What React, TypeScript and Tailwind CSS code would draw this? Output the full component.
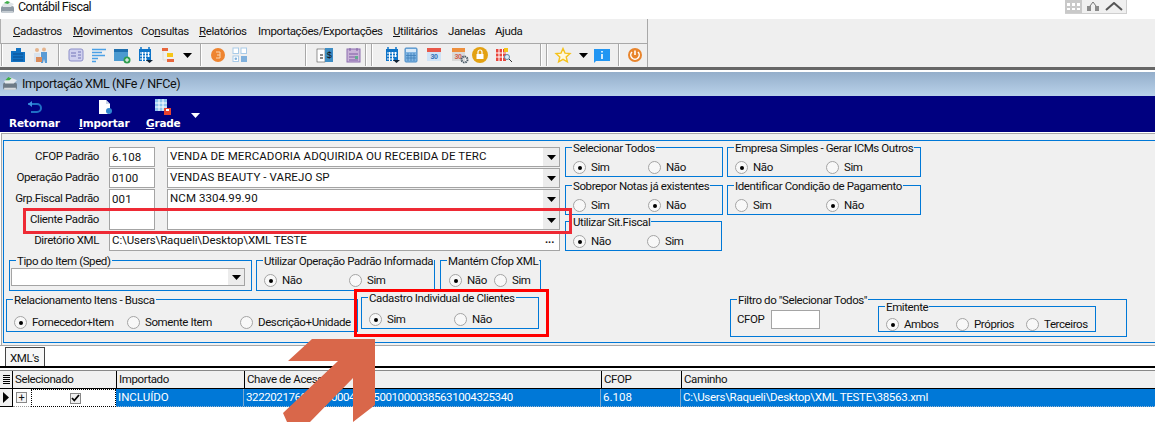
import React from 'react';

const Groove = ({ className = '' }: { className?: string }) => (
  <div className={`w-[2px] h-[22px] border-l border-[#a8a8a8] bg-white shrink-0 ${className}`} />
);

const Caret = ({ className = '', color = '#000' }: { className?: string; color?: string }) => (
  <svg width="9" height="5" viewBox="0 0 9 5" className={`shrink-0 ${className}`}>
    <path d="M0 0h9L4.5 5z" fill={color} />
  </svg>
);

// toolbar icons, 16x16 with a bit of bleed
const Ico = ({ className = '', children }: { className?: string; children: React.ReactNode }) => (
  <svg width="16" height="16" viewBox="0 0 16 16" className={`shrink-0 overflow-visible ${className}`}>
    {children}
  </svg>
);

const CalendarBlue = ({ className = '' }: { className?: string }) => (
  <Ico className={className}>
    <rect x="2" y="2" width="12" height="12" fill="#0e74c8" />
    <path d="M4 0v3M12 0v3" stroke="#0e74c8" strokeWidth="1.5" />
    <path d="M3 6h10M3 9h10M3 12h7M5.5 5v9M8.5 5v9M11.5 5v5" stroke="#fff" strokeWidth="1" />
    <path d="M9 13h7l-3.5 3z" fill="#123" />
  </Ico>
);

const Cal30 = ({ top, className = '' }: { top: string; className?: string }) => (
  <Ico className={className}>
    <rect x="1" y="2" width="14" height="12" fill="#cfe3f6" />
    <rect x="1" y="1" width="14" height="4" fill={top} />
    <text x="8" y="12" textAnchor="middle" fontSize="7" fontWeight="700" fill="#2f6fb4" fontFamily="Liberation Sans">30</text>
  </Ico>
);

const Radio = ({ label, on = false, className = '' }: { label: string; on?: boolean; className?: string }) => (
  <div className={`flex items-center h-[13px] shrink-0 ${className}`}>
    <div className="w-[13px] h-[13px] rounded-full border border-[#a4a4a4] bg-[#f8f8f8] flex items-center justify-center shrink-0">
      {on && <div className="w-[4px] h-[4px] rounded-full bg-black" />}
    </div>
    <span className="ml-[5px] leading-[13px] whitespace-nowrap">{label}</span>
  </div>
);

const Group = ({ title, className = '', children }: { title: string; className?: string; children?: React.ReactNode }) => (
  <div className={`relative border border-[#0078d7] shrink-0 ${className}`}>
    <span className="absolute -top-[6px] left-[6px] bg-[#f0f0f0] px-px leading-[13px] whitespace-nowrap">{title}</span>
    {children}
  </div>
);

const Input = ({ value = '', className = '' }: { value?: string; className?: string }) => (
  <div className={`h-[20px] border border-[#a4a4a4] bg-white pl-[2px] leading-[18px] tracking-[0.1px] shrink-0 whitespace-nowrap overflow-hidden ${className}`}>{value}</div>
);

const Select = ({ value = '', className = '' }: { value?: string; className?: string }) => (
  <div className={`border border-[#a4a4a4] bg-white pl-[2px] flex items-center justify-between shrink-0 tracking-[0.1px] ${className}`}>
    <span className="whitespace-nowrap">{value}</span>
    <div className="w-[16px] h-full bg-[#ececec] flex items-center justify-center">
      <Caret />
    </div>
  </div>
);

const FieldRow = ({ label, code, text }: { label: string; code: string; text: string }) => (
  <div className="flex items-center h-[20px]">
    <div className="w-[95px] text-right whitespace-nowrap">{label}</div>
    <Input value={code} className="ml-[10px] w-[46px]" />
    <Select value={text} className="ml-[12px] w-[393px] h-[20px]" />
  </div>
);

const Menu = () => (
  <div className="h-[25px] flex items-center pt-px pl-[12px] border-l border-[#b0b0b0] border-b border-b-[#a8a8a8] text-[#111]">
    <span className="w-[60px]"><u>C</u>adastros</span>
    <span className="w-[68px]"><u>M</u>ovimentos</span>
    <span className="w-[58px]">Co<u>n</u>sultas</span>
    <span className="w-[59px]"><u>R</u>elatórios</span>
    <span className="w-[135px]">Importações/Exportações</span>
    <span className="w-[55px]"><u>U</u>tilitários</span>
    <span className="w-[47px]">Janelas</span>
    <span>Ajuda</span>
  </div>
);

const Toolbar = () => (
  <div className="h-[22px] flex items-center">
    <Groove className="ml-[1px]" />
    {/* building */}
    <Ico className="ml-[7px]">
      <path d="M1 4h5V1h5v4h4v10H1z" fill="#1273c4" />
      <path d="M3 7h10M3 10h10M3 13h10" stroke="#0a4f8f" />
    </Ico>
    {/* people */}
    <Ico className="ml-[6px]">
      <circle cx="5" cy="3" r="2" fill="#e6b48c" />
      <circle cx="12" cy="2.5" r="2" fill="#e6b48c" />
      <path d="M2 6h6v9H2z" fill="#d9e3ee" />
      <path d="M9 5h6v11h-2l-1-4-1 4H9z" fill="#5a9bd5" />
      <rect x="4" y="10" width="6" height="5" fill="#d98a5a" />
    </Ico>
    <Groove className="ml-[10px]" />
    {/* card */}
    <Ico className="ml-[8px]">
      <rect x="1" y="2" width="14" height="12" rx="2" fill="#cfd0ee" stroke="#8d8fc9" />
      <path d="M3 6h5M3 9h5" stroke="#7274b8" />
      <path d="M10 5h3M10 8h3M10 11h3" stroke="#7274b8" />
    </Ico>
    {/* list */}
    <Ico className="ml-[7px]">
      <path d="M1 2.5h14M1 5.5h10M1 8.5h13M1 11.5h6M1 14.5h4" stroke="#4aa0e6" strokeWidth="1.4" />
    </Ico>
    {/* window */}
    <Ico className="ml-[7px]">
      <rect x="0" y="2" width="14" height="12" fill="#4b9ad0" />
      <rect x="0" y="2" width="14" height="3" fill="#1e6fae" />
      <circle cx="13" cy="13" r="3.5" fill="#2e9e4f" />
      <path d="M11 13h4M13 11v4" stroke="#fff" />
    </Ico>
    <CalendarBlue className="ml-[7px]" />
    {/* org */}
    <Ico className="ml-[8px]">
      <rect x="1" y="1" width="6" height="3" fill="#e8663c" />
      <rect x="6" y="6" width="6" height="4" fill="#f5c518" />
      <rect x="6" y="12" width="7" height="3" fill="#e8663c" />
      <path d="M2 4v9h4" stroke="#ddd" fill="none" />
    </Ico>
    <Caret className="ml-[6px]" />
    <Groove className="ml-[8px]" />
    {/* orange badge */}
    <Ico className="ml-[8px]">
      <circle cx="8" cy="8" r="7" fill="#ee8430" />
      <path d="M6 5h4v6H6M7 8h3" stroke="#fbd7b0" fill="none" />
    </Ico>
    {/* squares */}
    <Ico className="ml-[6px]">
      <rect x="1" y="1" width="5.5" height="5.5" fill="#fff" stroke="#a9cbe8" />
      <rect x="9" y="1" width="5.5" height="5.5" fill="#fff" stroke="#a9cbe8" />
      <rect x="1" y="9" width="5.5" height="5.5" fill="#fff" stroke="#a9cbe8" />
      <circle cx="3.8" cy="11.8" r="1.3" fill="#7fb0dc" />
      <rect x="9" y="9" width="6" height="6" fill="#7fb0dc" />
    </Ico>
    <Groove className="ml-[57px]" />
    {/* ledger */}
    <Ico className="ml-[10px]">
      <rect x="0" y="2" width="8" height="13" fill="#fff" stroke="#333" strokeWidth="0.5" />
      <rect x="8" y="1" width="8" height="14" fill="#3d8dc4" />
      <path d="M3 8h3M3 11h3" stroke="#111" />
      <text x="12" y="11" textAnchor="middle" fontSize="9" fill="#111" fontFamily="Liberation Sans">$</text>
    </Ico>
    {/* purple sheet */}
    <Ico className="ml-[13px]">
      <rect x="1" y="2" width="13" height="13" fill="#c9b4d8" stroke="#8d6fb0" />
      <path d="M4 1v3M11 1v3M3 7h9M3 10h9M3 13h9" stroke="#7d5aa3" />
      <rect x="9" y="9" width="3" height="3" fill="#5fae8f" />
    </Ico>
    <Groove className="ml-[3px]" />
    <Groove className="ml-[4px]" />
    <CalendarBlue className="ml-[11px]" />
    {/* calculator */}
    <Ico className="ml-[3px]">
      <rect x="2" y="1" width="12" height="14" rx="1" fill="#7fb4e2" stroke="#4a8cc6" />
      <rect x="3" y="2" width="10" height="3" fill="#d8e9f8" />
      <path d="M5 6v8M8 6v8M11 6v8M3 8.5h10M3 11h10" stroke="#3e7fb9" strokeWidth="0.8" />
    </Ico>
    <Cal30 top="#e8584a" className="ml-[7px]" />
    {/* calendar + gear */}
    <Ico className="ml-[10px]">
      <rect x="0" y="2" width="13" height="12" fill="#d9d9d9" />
      <rect x="0" y="1" width="13" height="4" fill="#ee8f3c" />
      <text x="6" y="12" textAnchor="middle" fontSize="7" fontWeight="700" fill="#d0604a" fontFamily="Liberation Sans">30</text>
      <circle cx="12.5" cy="12.5" r="3" fill="none" stroke="#4a5a66" strokeWidth="2" strokeDasharray="1.5 0.8" />
    </Ico>
    {/* lock */}
    <Ico className="ml-[4px]">
      <circle cx="8" cy="8" r="8" fill="#e3a112" />
      <rect x="4.5" y="7" width="7" height="5" fill="#fff" />
      <path d="M6 7V5a2 2 0 0 1 4 0v2" stroke="#fff" fill="none" strokeWidth="1.2" />
    </Ico>
    {/* red table + magnifier */}
    <Ico className="ml-[8px]">
      <rect x="0" y="2" width="10" height="12" fill="#e8453c" />
      <path d="M3 2v12M6.5 2v12M0 6h10M0 10h10" stroke="#fff" />
      <rect x="8" y="1" width="4" height="4" fill="#f5c518" />
      <circle cx="11" cy="10" r="2.5" fill="#dcecf8" stroke="#5b88a8" />
      <path d="M13 12l3 3" stroke="#333" />
    </Ico>
    <Groove className="ml-[28px]" />
    <Groove className="ml-[4px]" />
    <Ico className="ml-[7px]">
      <path d="M8 1.5l2 4.6 5 .5-3.8 3.3 1.2 4.9L8 12.3l-4.4 2.6 1.2-4.9L1 6.6l5-.5z" fill="#fff8dc" stroke="#f5c21c" strokeWidth="1.4" />
    </Ico>
    <Caret className="ml-[8px]" />
    {/* info */}
    <Ico className="ml-[6px]">
      <path d="M0 2h16v12H2l-2 2z" fill="#2196f3" />
      <path d="M8 4v1.5M8 7v5" stroke="#fff" strokeWidth="1.6" />
    </Ico>
    <Groove className="ml-[8px]" />
    <Ico className="ml-[7px]">
      <circle cx="8" cy="8" r="7" fill="#e8842c" />
      <path d="M8 3.5V8" stroke="#fff" strokeWidth="1.6" />
      <path d="M5 5a4.2 4.2 0 1 0 6 0" stroke="#fff" strokeWidth="1.5" fill="none" />
    </Ico>
  </div>
);

const Form = () => (
  <div className="h-[212px] pt-[6px] ml-px pl-px bg-[#f0f0f0] border-t border-l border-[#a8a8a8]">
    <div className="h-[203px] border-t border-l border-b border-[#0078d7]">
      {/* campos + radios de cima */}
      <div className="flex pt-[6px]">
        <div className="w-[556px] flex flex-col gap-[1px] shrink-0">
          <FieldRow label="CFOP Padrão" code="6.108" text="VENDA DE MERCADORIA ADQUIRIDA OU RECEBIDA DE TERC" />
          <FieldRow label="Operação Padrão" code="0100" text="VENDAS BEAUTY - VAREJO SP" />
          <FieldRow label="Grp.Fiscal Padrão" code="001" text="NCM 3304.99.90" />
          <FieldRow label="Cliente Padrão" code="" text="" />
          <div className="flex items-center h-[20px]">
            <div className="w-[95px] text-right">Diretório XML</div>
            <div className="ml-[10px] w-[451px] h-[20px] border border-[#a4a4a4] bg-white pl-[2px] flex justify-between items-center tracking-[-0.1px]">
              <span>C:\Users\Raqueli\Desktop\XML TESTE</span>
              <span className="w-[14px] text-[11px] font-bold leading-none pb-[4px]">...</span>
            </div>
          </div>
        </div>
        <div className="ml-[5px] w-[158px] shrink-0">
          <Group title="Selecionar Todos" className="h-[30px] pt-[13px] pl-[7px] flex">
            <Radio label="Sim" on className="w-[75px]" />
            <Radio label="Não" />
          </Group>
          <Group title="Sobrepor Notas já existentes" className="h-[30px] mt-[8px] pt-[13px] pl-[7px] flex">
            <Radio label="Sim" className="w-[75px]" />
            <Radio label="Não" on />
          </Group>
          <Group title="Utilizar Sit.Fiscal" className="h-[30px] mt-[6px] pt-[13px] pl-[7px] flex w-[157px]">
            <Radio label="Não" on className="w-[74px]" />
            <Radio label="Sim" />
          </Group>
        </div>
        <div className="ml-[4px] w-[194px] shrink-0">
          <Group title="Empresa Simples - Gerar ICMs Outros" className="h-[30px] pt-[13px] pl-[7px] flex">
            <Radio label="Não" on className="w-[91px]" />
            <Radio label="Sim" />
          </Group>
          <Group title="Identificar Condição de Pagamento" className="h-[30px] mt-[8px] pt-[13px] pl-[7px] flex">
            <Radio label="Sim" className="w-[91px]" />
            <Radio label="Não" on />
          </Group>
        </div>
      </div>

      <div className="flex mt-[9px] ml-[5px]">
        <Group title="Tipo do Item (Sped)" className="w-[243px] h-[31px] pt-[7px] pl-px">
          <Select className="w-[234px] h-[18px]" />
        </Group>
        <Group title="Utilizar Operação Padrão Informada" className="ml-[4px] w-[179px] h-[31px] pt-[13px] pl-[7px] flex">
          <Radio label="Não" on className="w-[85px]" />
          <Radio label="Sim" />
        </Group>
        <Group title="Mantém Cfop XML" className="ml-[5px] w-[101px] h-[31px] pt-[13px] pl-[8px] flex">
          <Radio label="Não" on className="w-[45px]" />
          <Radio label="Sim" />
        </Group>
      </div>

      <div className="flex items-start mt-[6px] ml-[2px]">
        <Group title="Relacionamento Itens - Busca" className="mt-[2px] w-[352px] h-[33px] pt-[16px] pl-[7px] flex">
          <Radio label="Fornecedor+Item" on className="w-[113px]" />
          <Radio label="Somente Item" className="w-[113px]" />
          <Radio label="Descrição+Unidade" />
        </Group>
        <Group title="Cadastro Individual de Clientes" className="ml-[3px] w-[178px] h-[32px] pt-[15px] pl-[7px] flex">
          <Radio label="Sim" on className="w-[85px]" />
          <Radio label="Não" />
        </Group>
        <Group title={'Filtro do "Selecionar Todos"'} className="mt-[2px] ml-[191px] w-[397px] h-[38px] flex items-start pl-[6px]">
          <span className="mt-[11px] w-[34px] shrink-0">CFOP</span>
          <div className="mt-[10px] w-[49px] h-[19px] border border-[#a4a4a4] bg-white shrink-0" />
          <Group title="Emitente" className="ml-[58px] mt-[6px] w-[218px] h-[26px] pt-[11px] pl-[7px] flex">
            <Radio label="Ambos" on className="w-[70px]" />
            <Radio label="Próprios" className="w-[70px]" />
            <Radio label="Terceiros" />
          </Group>
        </Group>
      </div>
    </div>
  </div>
);

const Grid = () => (
  <div className="text-[#111]">
    <div className="h-[21px] pl-[5px] border-t border-[#a8a8a8] bg-white flex items-end">
      <div className="w-[40px] h-[19px] border border-b-0 border-[#444] bg-[#f7f7f7] pl-[4px] leading-[20px]">XML's</div>
    </div>
    <div className="h-[2px] bg-black" />
    <div className="h-[2px] bg-white" />
    <div className="h-[19px] bg-[#f0f0f0] border-t border-b border-t-[#888] border-b-black flex leading-[17px] shrink-0">
      <div className="w-[13px] border-r border-black flex flex-col justify-center items-center gap-px pl-px">
        <div className="w-[7px] h-px bg-black" />
        <div className="w-[7px] h-px bg-black" />
        <div className="w-[7px] h-px bg-black" />
        <div className="w-[7px] h-px bg-black" />
        <div className="w-[7px] h-px bg-black" />
      </div>
      <div className="w-[104px] pl-[2px] border-r border-black">Selecionado</div>
      <div className="w-[128px] pl-[2px] border-r border-black">Importado</div>
      <div className="w-[357px] pl-[2px] border-r border-black">Chave de Acesso</div>
      <div className="w-[80px] pl-[2px] border-r border-black">CFOP</div>
      <div className="pl-[2px]">Caminho</div>
    </div>
    <div className="h-[18px] flex leading-[16px]">
      <div className="w-[13px] bg-[#f0f0f0] border-r border-b border-black flex items-center pl-[3px]">
        <svg width="6" height="11" viewBox="0 0 6 11"><path d="M0 0l6 5.5L0 11z" fill="#000" /></svg>
      </div>
      <div className="w-[18px] bg-white border-b border-dotted border-[#999] flex items-center pl-[3px]">
        <div className="w-[11px] h-[11px] border border-[#888] bg-[#f4f4f4] flex items-center justify-center text-[11px] leading-none">+</div>
      </div>
      <div className="w-[85px] bg-white border border-dotted border-black flex items-center justify-center pl-[3px]">
        <div className="w-[11px] h-[11px] border border-[#888] bg-[#efefef] flex items-center justify-center">
          <svg width="9" height="8" viewBox="0 0 9 8"><path d="M1 4l2.3 2.5L8 1" stroke="#000" strokeWidth="1.8" fill="none" /></svg>
        </div>
      </div>
      <div className="flex-1 bg-[#0078d7] text-white flex border-b border-dotted border-[#9db8d0]">
        <div className="w-[128px] pl-[2px] border-r border-[#7fa9cf] tracking-[0px]">INCLUÍDO</div>
        <div className="w-[357px] pl-[2px] border-r border-[#7fa9cf]">32220217600000000415550010000385631004325340</div>
        <div className="w-[80px] pl-[2px] border-r border-[#7fa9cf] tracking-[0px]">6.108</div>
        <div className="pl-[2px] whitespace-nowrap tracking-[-0.27px]">C:\Users\Raqueli\Desktop\XML TESTE\38563.xml</div>
      </div>
    </div>
  </div>
);

export default function App() {
  return (
    <div className="relative w-[1155px] h-[422px] overflow-hidden bg-white [font-family:'Roboto',sans-serif] text-[11.5px] tracking-[-0.4px] text-[#111]">
      {/* barra de titulo */}
      <div className="h-[19px] flex items-center">
        <svg width="15" height="15" viewBox="0 0 15 15" className="shrink-0 -mt-[4px]">
          <rect x="1" y="6" width="13" height="7" rx="2" fill="#8f9aa5" />
          <path d="M2 5l5-4 7 3-3 3H3z" fill="#dfe4e8" />
          <path d="M4 3l3-2 3 1-2 2z" fill="#3fae49" />
          <rect x="2" y="11" width="11" height="2" fill="#c5ccd2" />
        </svg>
        <span className="ml-[3px] text-[12.5px] tracking-[-0.6px] -mt-[4px]">Contábil Fiscal</span>
        <div className="ml-auto mr-[28px] w-[62px] h-[14px] -mt-[5px] bg-[#f0f0f0] border-r border-b border-[#cfcfcf] flex items-center">
          <div className="w-[17px] h-full bg-[#c9c9c9] grid grid-cols-3 gap-[2px] px-[2px] py-[3px]">
            <div className="bg-white" /><div className="bg-white" /><div className="bg-white" />
            <div className="bg-white" /><div className="bg-white" /><div className="bg-white" />
          </div>
          <svg width="14" height="11" viewBox="0 0 14 11" className="ml-[4px]">
            <path d="M1 5h4v5H1zM9 5h4v5H9z" fill="#8a8a8a" />
            <path d="M4 5l3-4 3 4" stroke="#777" fill="none" />
          </svg>
          <svg width="18" height="9" viewBox="0 0 18 9" className="ml-[5px]">
            <path d="M1 8l8-7 8 7" stroke="#555" strokeWidth="2" fill="none" />
          </svg>
        </div>
      </div>

      {/* menu e toolbar */}
      <div className="flex h-[48px] bg-[#efefef]">
        <div className="w-[648px] border-r border-[#a8a8a8] shrink-0">
          <Menu />
          <Toolbar />
        </div>
      </div>
      <div className="h-[3px] bg-[#666]" />
      <div className="h-[2px] bg-white" />

      {/* janela filha */}
      <div className="h-[24px] bg-gradient-to-b from-[#94aeca] to-[#b9d2ea] flex items-center">
        <svg width="16" height="16" viewBox="0 0 15 15" className="ml-[2px] shrink-0">
          <rect x="1" y="6" width="13" height="7" rx="2" fill="#6d7a86" />
          <path d="M2 5l5-4 7 3-3 3H3z" fill="#e6eaee" />
          <path d="M3 4l3-3 3 1-2 2z" fill="#3fae49" />
          <rect x="2" y="11" width="11" height="2" fill="#d5dade" />
        </svg>
        <span className="ml-[4px] text-[12.5px]">Importação XML (NFe / NFCe)</span>
      </div>
      <div className="h-[36px] bg-[#000080] flex text-white font-bold [font-family:'DejaVu_Sans',sans-serif] text-[10.5px] tracking-[-0.2px] leading-[14px]">
        <div className="w-[70px] pl-[9px] flex flex-col items-start">
          <svg width="16" height="14" viewBox="0 0 16 14" className="ml-[18px] mt-[5px]">
            <path d="M1 3h9a4 4 0 0 1 4 4v0a4 4 0 0 1-4 4H4" stroke="#1f6fc5" strokeWidth="2" fill="none" />
            <path d="M5 0L1 3l4 3z" fill="#3f8fe0" />
          </svg>
          <span className="mt-[1px]">Retornar</span>
        </div>
        <div className="w-[67px] ml-[1px] pl-[8px] flex flex-col items-start">
          <svg width="14" height="16" viewBox="0 0 14 16" className="ml-[19px] mt-[3px]">
            <path d="M1 1h7l4 4v10H1z" fill="#fff" />
            <path d="M8 1v4h4" fill="#c9d6e6" />
            <circle cx="11" cy="12" r="3" fill="#2f86d0" />
          </svg>
          <span className="mt-[1px]"><u>I</u>mportar</span>
        </div>
        <div className="pl-[8px] flex flex-col items-start">
          <svg width="16" height="16" viewBox="0 0 16 16" className="ml-[9px] mt-[3px]">
            <rect x="0" y="0" width="12" height="12" fill="#8ec4ee" />
            <path d="M4 0v12M8 0v12M0 4h12M0 8h12" stroke="#fff" />
            <rect x="9" y="9" width="7" height="7" fill="#e8432e" />
            <rect x="11" y="10" width="3" height="2" fill="#fff" />
          </svg>
          <span className="mt-[1px]"><u>G</u>rade</span>
        </div>
        <Caret color="#fff" className="ml-[10px] mt-[17px]" />
      </div>
      <div className="h-px bg-white" />

      <Form />
      <Grid />

      {/* destaques por cima da tela */}
      <div className="absolute left-[23px] top-[208px] w-[549px] h-[26px] border-[3px] border-[#ee2a35]" />
      <div className="absolute left-[354px] top-[289px] w-[195px] h-[48px] border-[3px] border-[#ff0000]" />
      <svg width="100" height="86" viewBox="280 336 100 86" className="absolute left-[280px] top-[336px]">
        <path d="M312 339H375V405L353 422V378L310 422H287L283 413L338 361H288z" fill="#d9674a" />
      </svg>
    </div>
  );
}
